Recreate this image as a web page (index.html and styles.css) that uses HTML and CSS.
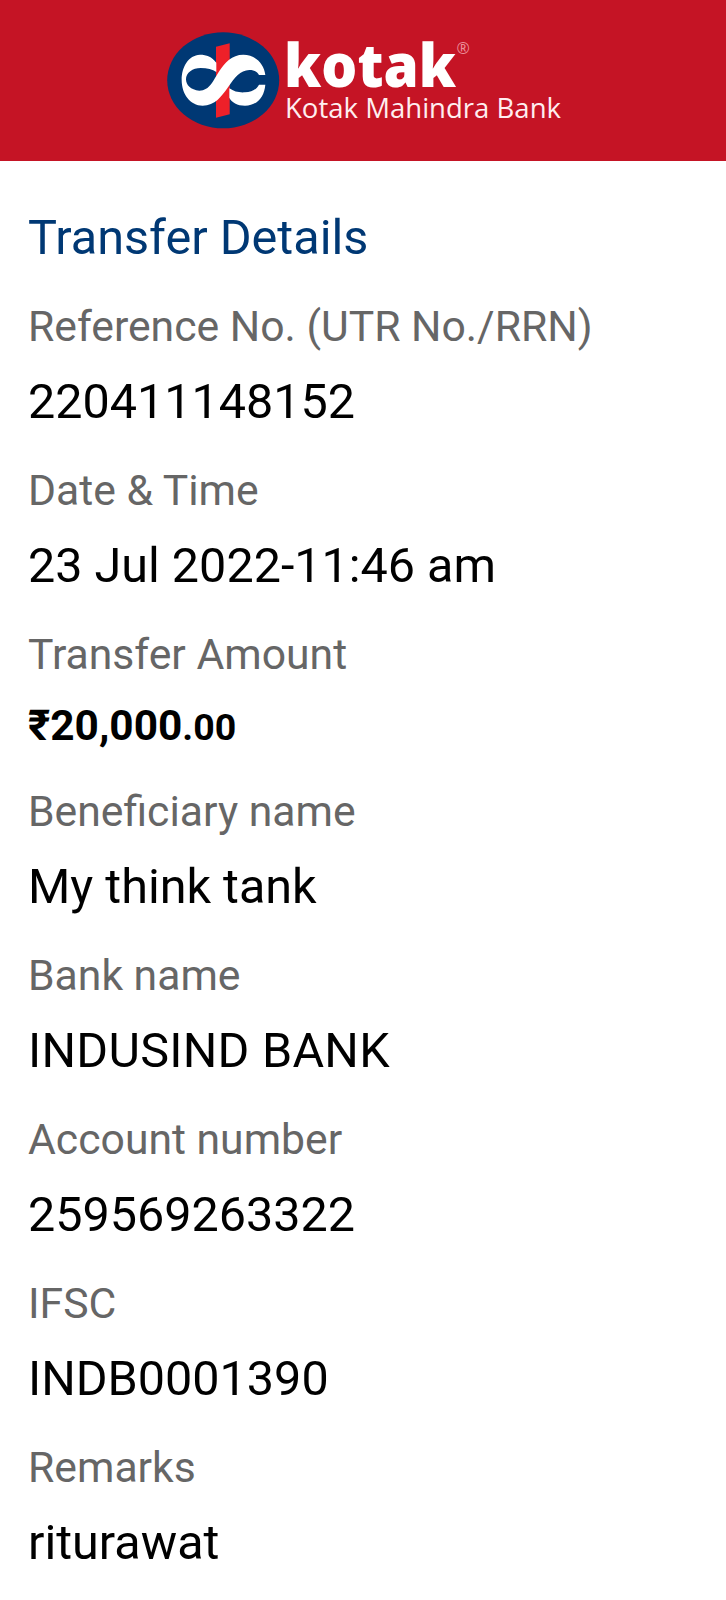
FILE: index.html
```html
<!DOCTYPE html>
<html lang="en">
<head>
<meta charset="utf-8">
<title>Transfer Details</title>
<link rel="stylesheet" href="styles.css">
</head>
<body>
<header class="banner">
<svg class="logo" viewBox="0 0 400 100" role="img" aria-label="Kotak Mahindra Bank">
<ellipse cx="56.2" cy="48.3" rx="56" ry="48" fill="#003874"/>
<path d="M49 14.7L62.7 11.3V82.3L49 85.7Z" fill="#ee2029"/>
<path transform="matrix(.3333 0 0 .3333 -7 -12)" fill="#fff" d="M169 128C155 110 140 104 120 104C85 106 65 140 65 180C65 222 90 257 128 257C165 257 185 228 203 203C225 172 240 151 268 150C285 150 293 157 297 165L316 165C312 130 285 104 250 104C215 104 195 128 178 153C160 180 150 212 118 212C92 210 78 195 78 178C78 158 98 144 122 144C142 144 158 148 169 156ZM208 205C222 215 236 218 255 217C275 216 290 208 297 194L316 194C313 232 290 257 255 257C232 257 215 247 208 233Z"/>
<text class="brand" x="117" y="55" textLength="172" lengthAdjust="spacingAndGlyphs">kotak</text>
<text class="mark" x="289.5" y="21.5">®</text>
<text class="bank" x="118" y="85.8" textLength="276" lengthAdjust="spacingAndGlyphs">Kotak Mahindra Bank</text>
</svg>
</header>
<main class="details">
<h1 class="title">Transfer Details</h1>
<dl class="list">
<dt class="label">Reference No. (UTR No./RRN)</dt><dd class="value">220411148152</dd>
<dt class="label">Date &amp; Time</dt><dd class="value">23 Jul 2022-11:46 am</dd>
<dt class="label">Transfer Amount</dt><dd class="value amount">₹20,000<span class="paise">.00</span></dd>
<dt class="label">Beneficiary name</dt><dd class="value">My think tank</dd>
<dt class="label">Bank name</dt><dd class="value caps">INDUSIND BANK</dd>
<dt class="label">Account number</dt><dd class="value">259569263322</dd>
<dt class="label">IFSC</dt><dd class="value">INDB0001390</dd>
<dt class="label">Remarks</dt><dd class="value">riturawat</dd>
</dl>
</main>
</body>
</html>
```

FILE: styles.css
```css
body { margin: 0; background: #fff; font-family: Roboto, "Noto Sans", sans-serif; overflow: hidden; }
.banner { height: 161px; background: #c51425; box-sizing: border-box; padding: 32px 0 0 167px; }
.logo { display: block; width: 400px; height: 100px; overflow: visible; }
.logo text { fill: #fff; }
.brand { font: 800 60px "Open Sans", sans-serif; }
.logo .mark { font: 16px "Open Sans", sans-serif; fill: #ec8f99; }
.logo .bank { font: 27px "Open Sans", sans-serif; fill: #ffeef0; }
.details { padding: 48px 28px 0; }
.title { margin: 0; font-size: 48.6px; font-weight: 400; line-height: 58px; color: #003874; }
.list { margin: 0; }
.label { height: 82px; line-height: 118px; font-size: 42.7px; color: #666; white-space: nowrap; }
.value { margin: 0; height: 82px; line-height: 106px; font-size: 48.5px; color: #000; white-space: nowrap; }
.caps { letter-spacing: .27px; }
.amount { font-weight: 700; font-size: 42.4px; height: 75px; line-height: 97px; }
.paise { font-size: 37.5px; }
```
